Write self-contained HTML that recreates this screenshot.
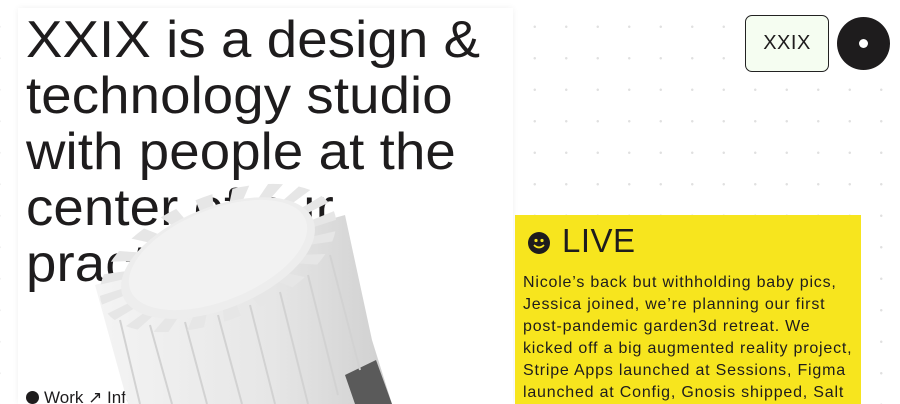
<!DOCTYPE html>
<html><head><meta charset="utf-8"><style>
html,body{margin:0;padding:0;width:900px;height:404px;overflow:hidden;}
body{position:relative;background:#fff;font-family:"Liberation Sans",sans-serif;color:#1e1c1d;
background-image:radial-gradient(circle,#e0e0e0 1px,transparent 1.5px);background-size:31.5px 31.5px;background-position:15px 11px;}
.card{position:absolute;left:18px;top:8px;width:495px;height:396px;background:#fff;box-shadow:0 0 6px rgba(0,0,0,0.06);}
h1{position:absolute;left:26px;top:12px;margin:0;font-weight:400;font-size:52px;line-height:56px;white-space:nowrap;letter-spacing:0.1px;transform:scaleX(1.05);transform-origin:0 0;}
.nav{position:absolute;left:26px;top:388px;font-size:17px;}
.nav b{display:inline-block;width:13px;height:13px;border-radius:50%;background:#1e1c1d;vertical-align:-1px;margin-right:5px;}
.btn{position:absolute;left:745px;top:15px;width:84px;height:57px;box-sizing:border-box;border:1.5px solid #222;border-radius:7px;background:#f5fdf1;font-size:20px;text-align:center;line-height:55px;letter-spacing:0.5px;}
.disc{position:absolute;left:837px;top:17px;width:53px;height:53px;border-radius:50%;background:#1e1c1d;}
.disc:after{content:"";position:absolute;left:22px;top:22px;width:9px;height:9px;border-radius:50%;background:#fff;}
.live{position:absolute;left:515px;top:215px;width:346px;height:189px;background:#f7e51e;overflow:hidden;}
.live h2{margin:0;position:absolute;left:13px;top:6px;font-weight:400;font-size:33px;line-height:40px;letter-spacing:0.5px;}
.smile{display:inline-block;width:22px;height:22px;border-radius:50%;background:#1e1c1d;position:relative;vertical-align:-2px;margin-right:12px;}
.smile svg{position:absolute;left:0;top:0;}
.live p{position:absolute;left:8px;top:57px;margin:0;font-size:16px;line-height:22px;white-space:nowrap;letter-spacing:0.8px;}
.art{position:absolute;left:0;top:0;}
</style></head><body>
<div class="card"></div>
<h1>XXIX is a design &amp;<br>technology studio<br>with people at the<br>center of our<br>practice</h1>
<div class="nav"><b></b>Work ↗ Info</div>
<div class="btn">XXIX</div>
<div class="disc"></div>
<div class="live"><h2><span class="smile"><svg width="22" height="22" viewBox="0 0 22 22"><circle cx="8" cy="8.5" r="1.6" fill="#f7e51e"/><circle cx="14" cy="8.5" r="1.6" fill="#f7e51e"/><path d="M6 13 Q11 18 16 13" stroke="#f7e51e" stroke-width="1.8" fill="none"/></svg></span>LIVE</h2>
<p>Nicole’s back but withholding baby pics,<br>Jessica joined, we’re planning our first<br>post-pandemic garden3d retreat. We<br>kicked off a big augmented reality project,<br>Stripe Apps launched at Sessions, Figma<br>launched at Config, Gnosis shipped, Salt</p></div>
<svg class="art" width="900" height="404" viewBox="0 0 900 404">
<defs><linearGradient id="g" x1="0" x2="1" y1="0" y2="0"><stop offset="0" stop-color="#f4f4f4"/><stop offset="0.6" stop-color="#e6e6e6"/><stop offset="1" stop-color="#cfcfcf"/></linearGradient></defs>
<polygon points="95,285 128,404 392,404 372,340 345,215" fill="url(#g)"/>
<polygon points="345,375 355,404 392,404 376,360" fill="#5a5a5a"/>
<g stroke="#d2d2d2" stroke-width="2">
<line x1="120" y1="320" x2="140" y2="404"/><line x1="150" y1="325" x2="172" y2="404"/><line x1="185" y1="322" x2="207" y2="404"/><line x1="218" y1="315" x2="242" y2="404"/><line x1="250" y1="305" x2="275" y2="404"/><line x1="280" y1="292" x2="308" y2="404"/><line x1="308" y1="275" x2="338" y2="395"/><line x1="330" y1="255" x2="360" y2="370"/>
</g>
<g transform="translate(218,258) rotate(-22) scale(125,62)">
<circle r="0.9" fill="none" stroke="#e6e6e6" stroke-width="0.2" stroke-dasharray="0.13 0.153"/>
<circle r="0.82" fill="#ededed"/>
</g>
<g transform="translate(218,255) rotate(-22) scale(118,57)"><circle r="0.8" fill="#f2f2f2"/></g>
</svg>
</body></html>
